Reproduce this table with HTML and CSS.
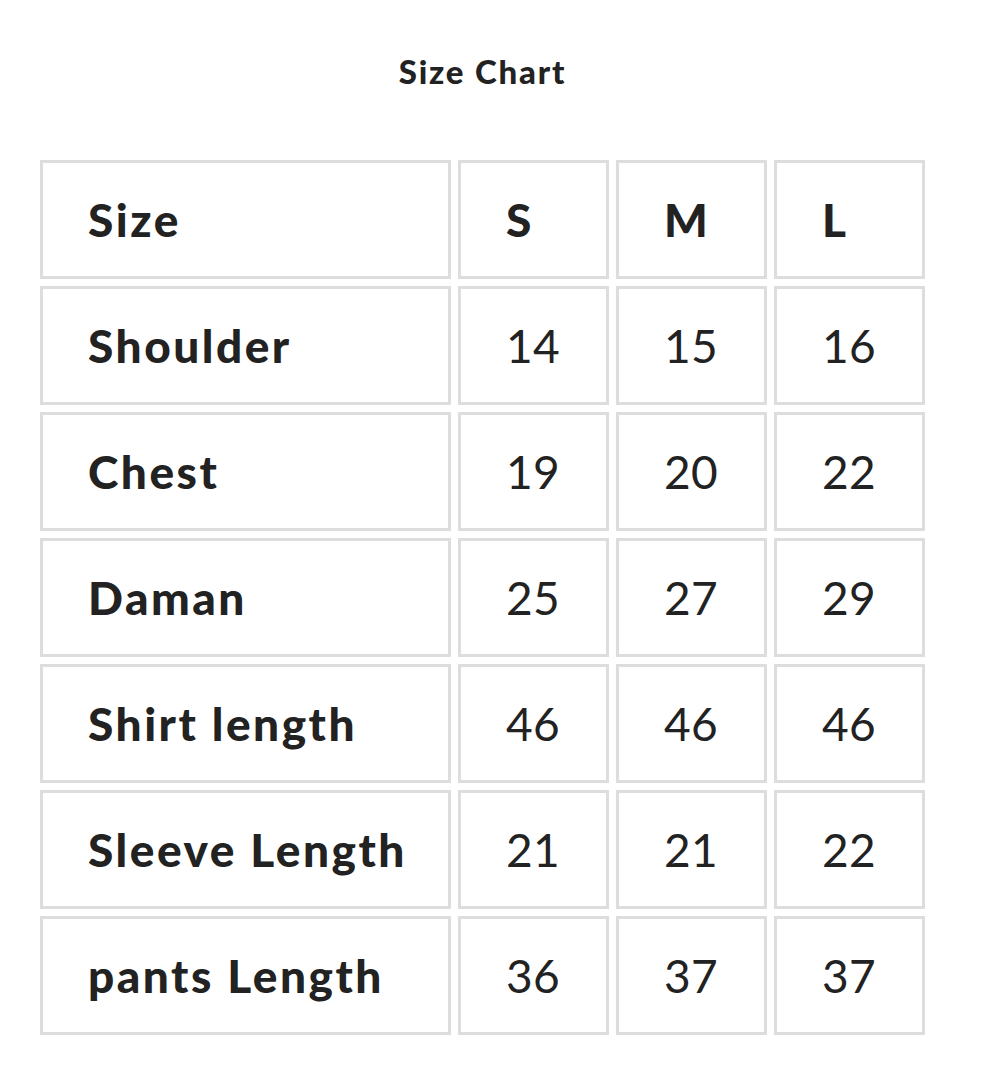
FILE: index.html
```html
<!DOCTYPE html>
<html lang="en">
<head>
<meta charset="utf-8">
<title>Size Chart</title>
<link rel="stylesheet" href="styles.css">
</head>
<body>
<div class="wrap">
  <h2 class="title">Size Chart</h2>
  <div class="chart">
    <div class="cell label">Size</div><div class="cell label">S</div><div class="cell label">M</div><div class="cell label">L</div>
    <div class="cell label">Shoulder</div><div class="cell">14</div><div class="cell">15</div><div class="cell">16</div>
    <div class="cell label">Chest</div><div class="cell">19</div><div class="cell">20</div><div class="cell">22</div>
    <div class="cell label">Daman</div><div class="cell">25</div><div class="cell">27</div><div class="cell">29</div>
    <div class="cell label">Shirt length</div><div class="cell">46</div><div class="cell">46</div><div class="cell">46</div>
    <div class="cell label">Sleeve Length</div><div class="cell">21</div><div class="cell">21</div><div class="cell">22</div>
    <div class="cell label">pants Length</div><div class="cell">36</div><div class="cell">37</div><div class="cell">37</div>
  </div>
</div>
</body>
</html>
```

FILE: styles.css
```css
html, body {
  margin: 0;
  padding: 0;
  background: #ffffff;
}
body {
  font-family: "Lato", "Liberation Sans", sans-serif;
  color: #222222;
}
.wrap {
  width: 885px;
  margin-left: 40px;
  padding-top: 51px;
}
.title {
  margin: 0 0 69px 0;
  text-align: center;
  font-size: 33px;
  line-height: 40px;
  font-weight: 900;
  letter-spacing: 1.8px;
}
.chart {
  display: grid;
  grid-template-columns: 411px 151px 151px 151px;
  grid-auto-rows: 119px;
  gap: 7px;
}
.cell {
  border: 3px solid #dddddd;
  display: flex;
  align-items: center;
  padding-left: 45px;
  font-size: 46px;
  font-weight: 400;
  letter-spacing: 0.3px;
}
.label {
  font-weight: 900;
  letter-spacing: 2.5px;
}
```
